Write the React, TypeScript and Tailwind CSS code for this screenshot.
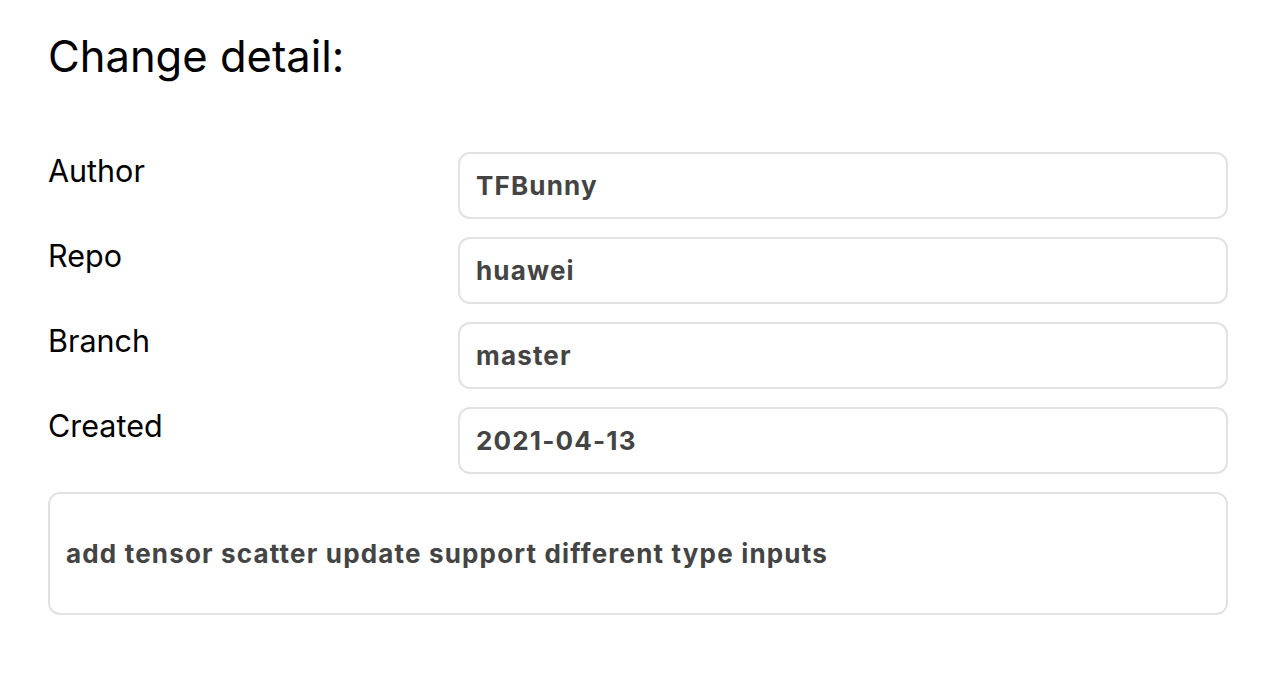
export default function App() {
  const rows = [
    { label: "Author", value: "TFBunny" },
    { label: "Repo", value: "huawei" },
    { label: "Branch", value: "master" },
    { label: "Created", value: "2021-04-13" },
  ];

  return (
    <div className="min-h-[676px] bg-white pl-12 pr-[52px] pt-[26px] font-['Inter',sans-serif] text-black">
      <h1 className="text-[43.5px] leading-[60px] font-normal">Change detail:</h1>

      {/* ── detail rows ─────────────────────────── */}
      <div className="mt-[66px] flex flex-col gap-[18px]">
        {rows.map((r) => (
          <div key={r.label} className="grid grid-cols-[410px_1fr]">
            <div className="text-[30.5px] leading-[38px]">{r.label}</div>
            <div className="flex h-[67px] items-center rounded-xl border-2 border-[#e2e2e2] px-[16px] text-[26px] font-bold tracking-[0.045em] text-[#444]">
              {r.value}
            </div>
          </div>
        ))}
      </div>

      <div className="mt-[18px] flex h-[123px] items-center rounded-xl border-2 border-[#e2e2e2] px-[16px] text-[26px] font-bold tracking-[0.045em] text-[#444]">
        add tensor scatter update support different type inputs
      </div>
    </div>
  );
}
